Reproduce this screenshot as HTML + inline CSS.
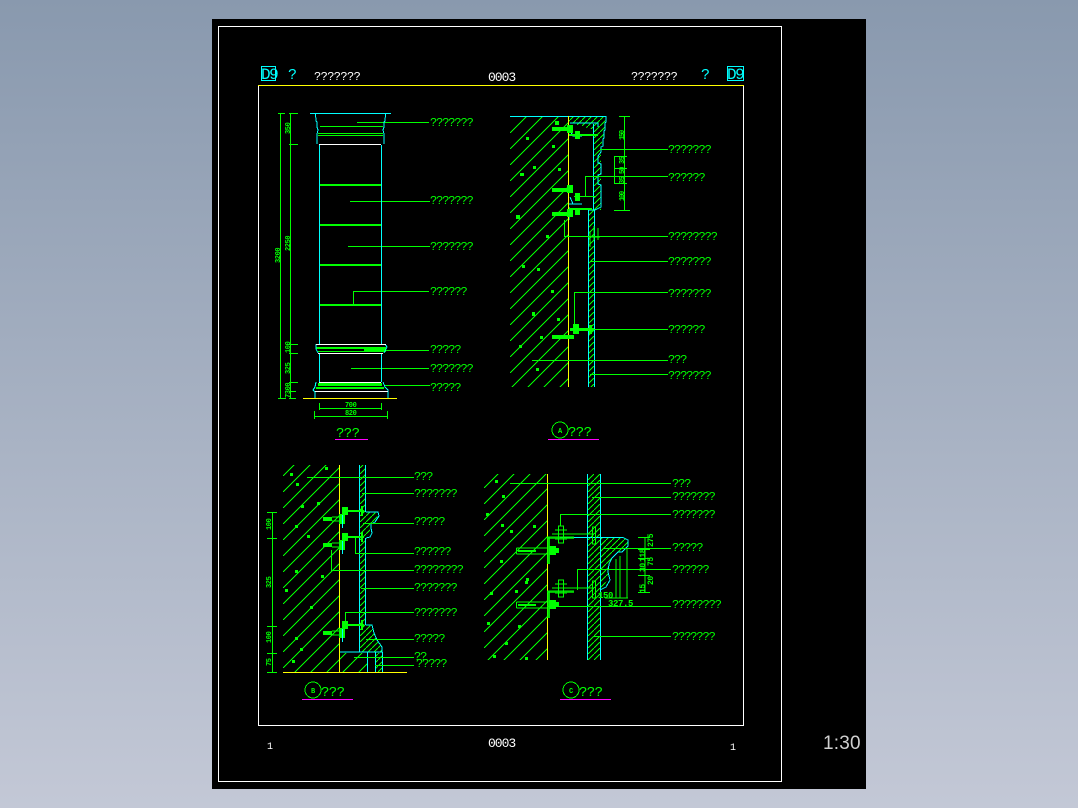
<!DOCTYPE html>
<html><head><meta charset="utf-8"><style>
html,body{margin:0;padding:0;width:1078px;height:808px;overflow:hidden;background:linear-gradient(#8999ae,#c3c8d6)}
svg{display:block;position:absolute;left:0;top:0}
text{font-family:"Liberation Mono",monospace;font-size:12px;letter-spacing:-1.1px}
.g text{fill:#00ff00}
.d text{font-size:7px;letter-spacing:-.4px;fill:#00ff00;font-weight:bold}
</style></head><body>
<svg width="1078" height="808" viewBox="0 0 1078 808" shape-rendering="crispEdges" fill="none">
<defs>
<clipPath id="ca"><rect x="510" y="117" width="58" height="270"/></clipPath>
<clipPath id="cb"><polygon points="283,465 339,465 339,653 367,653 367,672 283,672"/></clipPath>
<clipPath id="cc2"><rect x="484" y="474" width="63" height="186"/></clipPath>
<pattern id="hs" patternUnits="userSpaceOnUse" width="6" height="6"><path d="M-1 7L7 -1" stroke="#0f0"/></pattern>
<g id="bb"><rect x="0" y="-2" width="9" height="4" fill="#0f0"/><path d="M9-2H22M9 2H22" stroke="#0f0"/><rect x="16" y="-5" width="6" height="10" fill="#0f0"/><path d="M19.500-9V9" stroke="#0ff"/><rect x="19" y="-12" width="6" height="8" fill="#0f0"/><rect x="19" y="-9" width="22" height="2" fill="#0f0"/><rect x="38" y="-13" width="2" height="10" fill="#0f0"/></g>
<g id="cc"><path d="M0.500-3H31M0.500 3H31M0.500-3V3" stroke="#0f0"/><rect x="2" y="-1" width="18" height="2" fill="#0f0"/><rect x="31" y="-14" width="3" height="27" fill="#0f0" opacity=".85"/><rect x="33" y="-5" width="7" height="9" fill="#0f0"/><rect x="38" y="-3" width="5" height="5" fill="#0f0"/>
<path d="M36-17H78M31-14H58" stroke="#0f0"/><rect x="31" y="-14" width="27" height="2" fill="#0f0" opacity=".7"/><path d="M42.500-25H47.500V-8H42.500ZM39-21H51M39-12H51" stroke="#0f0"/><path d="M76.500-24V-7H79.500V-24Z" stroke="#0f0"/></g>
</defs>
<rect x="212" y="19" width="654" height="770" fill="#000"/>
<rect x="218.500" y="26.500" width="563" height="755" stroke="#fff"/>
<path d="M258.500 85.500V725.500H743.500V85.500" stroke="#fff"/>
<path d="M258 85.500H744" stroke="#ff0"/>
<g stroke="#0ff"><rect x="261.500" y="66.500" width="14" height="14"/><rect x="727.500" y="66.500" width="16" height="14"/></g>
<g fill="#0ff"><text x="261" y="79" style="font-size:16px;letter-spacing:-1.5px">D9</text><text x="727" y="79" style="font-size:16px;letter-spacing:-1.5px">D9</text><text x="288" y="79" style="font-size:15px">?</text><text x="701" y="79" style="font-size:15px">?</text></g>
<g fill="#fff"><text x="314" y="80" style="font-size:12px;letter-spacing:-.6px">???????</text><text x="631" y="80" style="font-size:12px;letter-spacing:-.6px">???????</text><text x="488" y="81" style="font-size:13px;letter-spacing:-1px">0003</text><text x="488" y="747" style="font-size:13px;letter-spacing:-1px">0003</text><text x="267" y="749" style="font-size:10px">1</text><text x="730" y="750" style="font-size:10px">1</text></g>
<text x="823" y="749" fill="#d0d0d0" style="font-family:'Liberation Sans',sans-serif;font-size:19px;letter-spacing:.2px;font-weight:400">1:30</text>

<!-- ELEVATION -->
<g stroke="#0f0">
<path d="M280.500 113V398M290.500 113V398M278 113.500H285M289 113.500H298M289 144.500H298M278 398.500H286M289 344.500H298M289 353.500H298M289 382.500H298M289 391.500H296M289 398.500H296"/>
<path d="M357 122.500H429M350 201.500H430M348 246.500H430M353 291.500H429M353.500 291V305M385 350.500H429M351 368.500H429M385 385.500H430"/>
<path d="M319.500 403V410M381.500 403V410M320 408.500H381M314.500 411V419M387.500 411V419M315 416.500H387"/>
<path d="M320 126.500H383M318 133.500H383M318 135.500H383"/>
<path d="M319 184.500H381M319 185.500H381M319 225.500H381M319 224.500H381M319 264.500H381M319 265.500H381M319 304.500H381M319 305.500H381"/>
</g>
<g fill="#0f0"><rect x="316" y="347" width="70" height="2"/><rect x="364" y="349" width="22" height="3"/><rect x="318" y="351" width="68" height="1"/><rect x="318" y="383" width="64" height="3"/><rect x="316" y="387" width="68" height="2"/></g>
<g stroke="#0ff">
<path d="M310 113.500H391M315.500 114L316 121L317 122V127L318 130L317 134V144M385.500 114L385 121L384 122V127L383 130L384 134V144"/>
<path d="M319.500 145V344M381.500 145V344M319.500 354V382M381.500 354V382M316 344V349L318 353M385 344L387 347L384 353M316 382L315 387L313 390L315 392V398M383 382L385 387L388 390V398"/>
</g>
<g stroke="#fff"><path d="M319 144.500H381M316 344.500H386M318 353.500H383M319 382.500H381M315 391.500H388"/></g>
<path d="M303 398.500H397" stroke="#ff0"/>
<path d="M335 439.500H368" stroke="#f0f"/>

<!-- SECTION A -->
<path clip-path="url(#ca)" stroke="#0f0" d="M510 133l58-58M510 149l58-58M510 165l58-58M510 181l58-58M510 197l58-58M510 213l58-58M510 229l58-58M510 245l58-58M510 261l58-58M510 277l58-58M510 293l58-58M510 309l58-58M510 325l58-58M510 341l58-58M510 357l58-58M510 373l58-58M510 389l58-58M510 405l58-58M510 421l58-58M510 437l58-58"/>
<polygon points="568,116 606,116 605,122 603,138 600,150 597,156 597,210 594,210 594,130 568,122" fill="url(#hs)"/>
<polygon points="588,210 594,210 594,387 588,387" fill="url(#hs)"/>
<rect x="594" y="125" width="7" height="85" fill="url(#hs)"/>
<g stroke="#0ff">
<path d="M510 116.500H606V122L605 123V130L604 131V138L603 139V146L601 147V152L598 156V163L601 164V174L598 175V184L601 185V207L595 210H589"/>
<path d="M570 123H598V127M593.500 124V210M588.500 210V387M594.500 210V387M569 129L573 136H582M570 197L573 204M569 204H582M569 207V220"/>
</g>
<path d="M568.500 116V387" stroke="#ff0"/>
<g stroke="#0f0">
<path d="M600 149.500H668M586 176.500H668M585.500 176V196M564 236.500H668M564.500 220V236M590 261.500H668M574 292.500H668M574.500 292V325M590 329.500H668M532 360.500H668M590 374.500H668"/>
<path d="M624.500 116V210M619 116.500H630M614 156.500H627M614 168.500H627M614 183.500H627M614 210.500H630M614.500 156V183M574 196.500H595"/>
</g>
<g fill="#0f0">
<rect x="552" y="127" width="20" height="4"/><rect x="567" y="125" width="6" height="8"/><rect x="569" y="134" width="29" height="2"/><rect x="575" y="131" width="5" height="8"/>
<rect x="552" y="188" width="20" height="4"/><rect x="567" y="185" width="6" height="8"/><rect x="575" y="193" width="5" height="8"/>
<rect x="552" y="212" width="20" height="4"/><rect x="567" y="209" width="6" height="8"/><rect x="569" y="208" width="23" height="2"/><rect x="575" y="208" width="5" height="7"/>
<rect x="552" y="335" width="22" height="4"/><rect x="570" y="328" width="24" height="3"/><rect x="573" y="324" width="6" height="10"/><rect x="589" y="325" width="3" height="9"/>
</g>
<path d="M588 237h12M590 231v16M598 228v12M594 226v14" stroke="#0f0"/>
<circle cx="560" cy="430" r="8" stroke="#0f0"/>
<path d="M548 439.500H599" stroke="#f0f"/>

<!-- SECTION B -->
<path clip-path="url(#cb)" stroke="#0f0" d="M283 476l84-84M283 492l84-84M283 508l84-84M283 524l84-84M283 540l84-84M283 556l84-84M283 572l84-84M283 588l84-84M283 604l84-84M283 620l84-84M283 636l84-84M283 652l84-84M283 668l84-84M283 684l84-84M283 700l84-84M283 716l84-84M283 732l84-84M283 748l84-84M283 764l84-84"/>
<polygon points="360,465 365,465 365,652 360,652" fill="url(#hs)"/>
<polygon points="365,512 379,513 375,522 370,524 370,534 365,538" fill="url(#hs)"/>
<polygon points="365,625 372,626 375,635 382,648 382,652 365,652" fill="url(#hs)"/>
<rect x="375" y="653" width="7" height="19" fill="url(#hs)"/>
<g stroke="#0ff">
<path d="M359.500 465V652M365.500 465V512M365.500 538V625M366 512H378L379 516L375 522L371 524V528L372 533L370 537L366 538M366 625H372L374 633L377 640L382 647V652H339M367.500 652V672M375.500 652V672M382.500 652V672"/>
</g>
<path d="M339.500 465V672M283 672.500H407" stroke="#ff0"/>
<g stroke="#0f0">
<path d="M307 477.500H414M362 493.500H414M363 523.500H414M355 553.500H414M355.500 538V553M331 570.500H414M331.500 550V570M361 588.500H414M345 612.500H414M345.500 612V625M366 639.500H414M354 657.500H414M375 665.500H414"/>
<path d="M272.500 512V672M267 512.500H277M267 538.500H277M267 626.500H277M267 653.500H277M267 672.500H277"/>
</g>
<use href="#bb" x="323" y="519"/>
<use href="#bb" x="323" y="545"/>
<use href="#bb" x="323" y="633"/>
<circle cx="313" cy="690" r="8" stroke="#0f0"/>
<path d="M302 699.500H353" stroke="#f0f"/>

<!-- SECTION C -->
<path clip-path="url(#cc2)" stroke="#0f0" d="M484 488l63-63M484 504l63-63M484 520l63-63M484 536l63-63M484 552l63-63M484 568l63-63M484 584l63-63M484 600l63-63M484 616l63-63M484 632l63-63M484 648l63-63M484 664l63-63M484 680l63-63M484 696l63-63M484 712l63-63"/>
<polygon points="588,474 600,474 600,660 588,660" fill="url(#hs)"/>
<polygon points="600,537 622,537 628,541 628,546 622,552 617,553 611,560 608,568 608,578 604,586 600,590" fill="url(#hs)"/>
<g stroke="#0ff">
<path d="M587.500 474V660M600.500 474V660M560 537.500H623L628 540V546L622 552H618L612 558L609 564L608 572L610 580L606 587L600 590"/>
</g>
<path d="M547.500 474V660" stroke="#ff0"/>
<g stroke="#0f0">
<path d="M510 483.500H671M592 497.500H671M560 514.500H671M560.500 514V526M603 548.500H671M577 569.500H671M577.500 569V590M547 606.500H671M593 636.500H671"/>
<path d="M616 559V598M620 556V598M627 548V598M605 598H628"/>
<path d="M645 537V592M638 537.500H650M638 549.500H650M638 558.500H650M638 575.500H650M638 592.500H650"/>
</g>
<use href="#cc" x="516" y="551"/>
<use href="#cc" x="516" y="605"/>
<circle cx="571" cy="690" r="8" stroke="#0f0"/>
<path d="M560 699.500H611" stroke="#f0f"/>

<!-- rock specks -->
<g fill="#0f0">
<path d="M555 121h4v4h-4ZM526 137h3v3h-3ZM520 173h4v3h-4ZM533 166h3v3h-3ZM558 168h3v3h-3ZM552 145h3v3h-3ZM516 215h4v4h-4ZM546 235h3v3h-3ZM522 265h3v3h-3ZM537 268h3v3h-3ZM551 290h3v3h-3ZM557 318h3v3h-3ZM532 312h3v4h-3ZM540 336h3v3h-3ZM536 368h3v3h-3ZM519 345h3v3h-3Z"/>
<path d="M290 473h3v3h-3ZM296 483h3v3h-3ZM301 505h3v3h-3ZM317 502h3v3h-3ZM295 525h3v3h-3ZM307 535h3v3h-3ZM295 570h3v3h-3ZM321 575h3v3h-3ZM285 589h3v3h-3ZM310 606h3v3h-3ZM295 637h3v3h-3ZM300 648h3v3h-3ZM325 467h3v3h-3ZM292 660h3v3h-3Z"/>
<path d="M495 480h3v3h-3ZM502 495h3v3h-3ZM486 513h3v3h-3ZM501 524h3v3h-3ZM510 530h3v3h-3ZM533 525h3v3h-3ZM500 560h3v3h-3ZM526 578h3v3h-3ZM525 581h3v3h-3ZM490 592h3v3h-3ZM515 590h3v3h-3ZM487 622h3v3h-3ZM518 625h3v3h-3ZM505 642h3v3h-3ZM493 655h3v3h-3ZM525 657h3v3h-3Z"/>
</g>

<!-- labels -->
<g class="g" transform="translate(0 -1)">
<text x="430" y="127">???????</text><text x="430" y="205">???????</text><text x="430" y="251">???????</text><text x="430" y="296">??????</text><text x="430" y="354">?????</text><text x="430" y="373">???????</text><text x="430" y="392">?????</text><text x="336" y="438" style="font-size:14px;letter-spacing:-.6px">???</text>
<text x="668" y="154">???????</text><text x="668" y="182">??????</text><text x="668" y="241">????????</text><text x="668" y="266">???????</text><text x="668" y="298">???????</text><text x="668" y="334">??????</text><text x="668" y="364">???</text><text x="668" y="380">???????</text><text x="568" y="437" style="font-size:14px;letter-spacing:-.6px">???</text>
<text x="414" y="481">???</text><text x="414" y="498">???????</text><text x="414" y="526">?????</text><text x="414" y="556">??????</text><text x="414" y="574">????????</text><text x="414" y="592">???????</text><text x="414" y="617">???????</text><text x="414" y="643">?????</text><text x="414" y="661">??</text><text x="416" y="668">?????</text><text x="321" y="697" style="font-size:14px;letter-spacing:-.6px">???</text>
<text x="672" y="488">???</text><text x="672" y="501">???????</text><text x="672" y="519">???????</text><text x="672" y="552">?????</text><text x="672" y="574">??????</text><text x="672" y="609">????????</text><text x="672" y="641">???????</text><text x="579" y="697" style="font-size:14px;letter-spacing:-.6px">???</text>
</g>
<g class="d">
<text x="345" y="407">700</text><text x="345" y="415">820</text>
<text transform="translate(290 134) rotate(-90)">350</text>
<text transform="translate(290 251) rotate(-90)">2250</text>
<text transform="translate(280 263) rotate(-90)">3200</text>
<text transform="translate(290 353) rotate(-90)">100</text>
<text transform="translate(290 374) rotate(-90)">325</text>
<text transform="translate(290 398) rotate(-90)">7300</text>
<text transform="translate(624 140) rotate(-90)" style="letter-spacing:-1.2px">150</text>
<text transform="translate(624 164) rotate(-90)">35</text>
<text transform="translate(624 174) rotate(-90)" style="letter-spacing:-1px">50</text>
<text transform="translate(624 184) rotate(-90)">35</text>
<text transform="translate(624 201) rotate(-90)" style="letter-spacing:-1.2px">100</text>
<text transform="translate(271 530) rotate(-90)">100</text>
<text transform="translate(271 588) rotate(-90)">325</text>
<text transform="translate(271 643) rotate(-90)">100</text>
<text transform="translate(271 666) rotate(-90)">75</text>
<text transform="translate(653 547) rotate(-90)" style="font-size:8px">275</text>
<text transform="translate(653 566) rotate(-90)" style="font-size:8px">75</text>
<text transform="translate(645 562) rotate(-90)" style="font-size:8px">118</text>
<text transform="translate(645 572) rotate(-90)" style="font-size:8px">30</text>
<text transform="translate(653 585) rotate(-90)" style="font-size:8px">20</text>
<text transform="translate(645 593) rotate(-90)" style="font-size:8px">15</text>
<text x="608" y="606" style="font-size:9px;letter-spacing:-.4px">327.5</text><text x="598" y="598" style="font-size:9px;letter-spacing:-.4px">150</text>
<text x="558" y="433">A</text><text x="311" y="693">B</text><text x="569" y="693">C</text>
</g>
</svg>
</body></html>
